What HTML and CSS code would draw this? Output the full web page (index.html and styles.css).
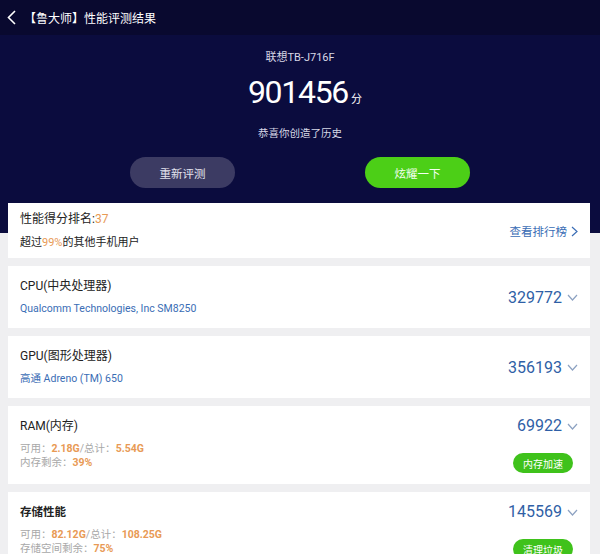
FILE: index.html
```html
<!DOCTYPE html>
<html lang="zh-CN">
<head>
  <meta charset="UTF-8">
  <title>鲁大师 性能评测结果</title>
  <link rel="stylesheet" href="styles.css">
</head>
<body>
  <div class="header">
    <div class="topbar">
      <svg class="back" width="9" height="15" viewBox="0 0 9 15"><path d="M8 1 L1.5 7.5 L8 14" fill="none" stroke="#fff" stroke-width="1.6"/></svg>
      <span class="title">【鲁大师】性能评测结果</span>
    </div>
    <div class="device">联想TB-J716F</div>
    <div class="score">901456<span class="unit">分</span></div>
    <div class="congrats">恭喜你创造了历史</div>
    <div class="actions">
      <div class="btn btn-gray">重新评测</div>
      <div class="btn btn-green">炫耀一下</div>
    </div>
  </div>

  <div class="list">
    <div class="card rank">
      <div>
        <div class="line1">性能得分排名:<span class="orange">37</span></div>
        <div class="line2">超过<span class="orange">99%</span>的其他手机用户</div>
      </div>
      <div class="link">查看排行榜
        <svg width="7" height="11" viewBox="0 0 7 11"><path d="M1 1 L6 5.5 L1 10" fill="none" stroke="#3a6db5" stroke-width="1.2"/></svg>
      </div>
    </div>

    <div class="card">
      <div>
        <div class="name">CPU(中央处理器)</div>
        <div class="sub">Qualcomm Technologies, Inc SM8250</div>
      </div>
      <div class="value">329772
        <svg width="11" height="7" viewBox="0 0 11 7"><path d="M1 1 L5.5 6 L10 1" fill="none" stroke="#8da2c2" stroke-width="1.2"/></svg>
      </div>
    </div>

    <div class="card">
      <div>
        <div class="name">GPU(图形处理器)</div>
        <div class="sub">高通 Adreno (TM) 650</div>
      </div>
      <div class="value">356193
        <svg width="11" height="7" viewBox="0 0 11 7"><path d="M1 1 L5.5 6 L10 1" fill="none" stroke="#8da2c2" stroke-width="1.2"/></svg>
      </div>
    </div>

    <div class="card top">
      <div>
        <div class="name">RAM(内存)</div>
        <div class="info first">可用：<span class="orange">2.18G</span>/总计：<span class="orange">5.54G</span></div>
        <div class="info">内存剩余：<span class="orange">39%</span></div>
      </div>
      <div class="right">
        <div class="value">69922
          <svg width="11" height="7" viewBox="0 0 11 7"><path d="M1 1 L5.5 6 L10 1" fill="none" stroke="#8da2c2" stroke-width="1.2"/></svg>
        </div>
        <div class="pill">内存加速</div>
      </div>
    </div>

    <div class="card top">
      <div>
        <div class="name bold">存储性能</div>
        <div class="info first">可用：<span class="orange">82.12G</span>/总计：<span class="orange">108.25G</span></div>
        <div class="info">存储空间剩余：<span class="orange">75%</span></div>
      </div>
      <div class="right">
        <div class="value">145569
          <svg width="11" height="7" viewBox="0 0 11 7"><path d="M1 1 L5.5 6 L10 1" fill="none" stroke="#8da2c2" stroke-width="1.2"/></svg>
        </div>
        <div class="pill">清理垃圾</div>
      </div>
    </div>
  </div>
</body>
</html>
```

FILE: styles.css
```css
body {
  margin: 0;
  font-family: Roboto, "Noto Sans CJK SC", sans-serif;
  background-color: #efeff1;
  overflow: hidden;
}

.header {
  background-color: #0b0c3e;
  color: white;
  height: 233px;
  display: flex;
  flex-direction: column;
  align-items: center;
}

.topbar {
  align-self: stretch;
  height: 35px;
  background-color: #09092f;
  display: flex;
  align-items: center;
  padding-left: 7px;
}

.back {
  margin-right: 8px;
}

.title {
  font-size: 12px;
}

.device {
  margin-top: 15px;
  font-size: 11px;
  line-height: 16px;
  color: #d8d8e6;
}

.score {
  margin-top: 8px;
  font-size: 32px;
  line-height: 36px;
  letter-spacing: -1.3px;
  padding-left: 10px;
}

.unit {
  font-size: 11px;
  line-height: 11px;
  letter-spacing: 0;
  margin-left: 3px;
}

.congrats {
  margin-top: 16px;
  font-size: 10.5px;
  line-height: 16px;
  color: #d8d8e6;
}

.actions {
  margin-top: 15px;
  display: flex;
  gap: 130px;
}

.btn {
  width: 105px;
  height: 31px;
  border-radius: 16px;
  display: flex;
  align-items: center;
  justify-content: center;
  font-size: 11.5px;
}

.btn-gray {
  background-color: #3c3b63;
  color: #e4e4ee;
}

.btn-green {
  background-color: #4ccf17;
  color: #f4fff0;
}

.list {
  margin: -30px 10px 0 8px;
  display: flex;
  flex-direction: column;
  gap: 8px;
}

.card {
  background: white;
  padding: 12px 12px 11px 12px;
  display: flex;
  justify-content: space-between;
  align-items: center;
}

.card.top {
  align-items: flex-start;
}

.rank {
  padding: 8px 12px 7px 12px;
}

.line1 {
  font-size: 12px;
  line-height: 16px;
  color: #222;
}

.line2 {
  margin-top: 8px;
  font-size: 11px;
  line-height: 16px;
  color: #222;
}

.orange {
  color: #e89a55;
}

.link {
  font-size: 11.5px;
  color: #3a6db5;
  display: flex;
  align-items: center;
  gap: 4px;
}

.name {
  font-size: 12px;
  line-height: 16px;
  color: #222;
}

.name.bold {
  font-weight: bold;
  font-size: 11.5px;
}

.sub {
  margin-top: 7px;
  font-size: 10.5px;
  line-height: 16px;
  color: #3a6db5;
}

.info {
  font-size: 10.5px;
  line-height: 14px;
  color: #a8a8a8;
}

.info .orange {
  font-weight: bold;
}

.info.first {
  margin-top: 8px;
}

.value {
  font-size: 16px;
  line-height: 20px;
  color: #2f5fa6;
  display: flex;
  align-items: center;
  gap: 5px;
}

.card.top .value {
  margin-top: -2px;
}

.right {
  display: flex;
  flex-direction: column;
  align-items: flex-end;
}

.pill {
  margin-top: 17px;
  margin-right: 5px;
  width: 60px;
  height: 20px;
  border-radius: 10px;
  background-color: #3fc21b;
  color: white;
  font-size: 10px;
  display: flex;
  align-items: center;
  justify-content: center;
}
```
